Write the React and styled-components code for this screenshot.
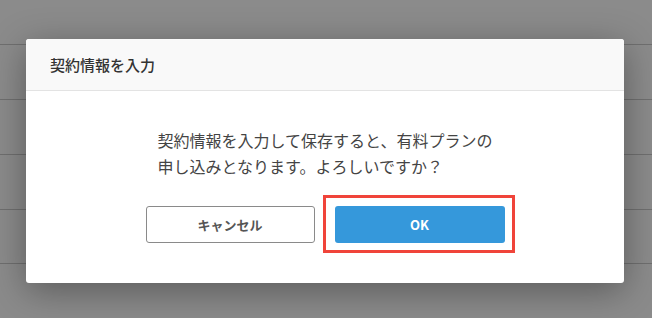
import React from "react";
import styled, { createGlobalStyle } from "styled-components";

const Global = createGlobalStyle`
  html, body { margin: 0; padding: 0; }
  body {
    background: #8b8b8b;
    font-family: "Noto Sans CJK JP", "Noto Sans", sans-serif;
  }
`;

const Page = styled.div`
  position: relative;
  width: 652px;
  height: 318px;
  overflow: hidden;
  background: #8b8b8b;
`;

const Row = styled.div`
  height: ${(p) => p.$h}px;
  border-bottom: 1px solid #6f6f6f;
`;

const Modal = styled.div`
  position: absolute;
  left: 26px;
  top: 39px;
  width: 598px;
  background: #fff;
  border-radius: 3px;
  box-shadow: 0 8px 36px rgba(0, 0, 0, 0.35);
  overflow: hidden;
`;

const Header = styled.div`
  height: 51px;
  display: flex;
  align-items: center;
  padding: 0 24px;
  background: #f9f9f9;
  border-bottom: 1px solid #e3e3e3;
`;

const Title = styled.h2`
  margin: 0;
  font-size: 15px;
  font-weight: 500;
  color: #333;
`;

const Body = styled.div`
  display: flex;
  flex-direction: column;
  align-items: center;
  padding: 36px 0 40px;
`;

const Message = styled.p`
  margin: 0 0 27px;
  font-size: 16px;
  line-height: 26px;
  color: #444;
  text-align: left;
`;

const Actions = styled.div`
  display: flex;
  gap: 20px;
`;

const Button = styled.button`
  width: ${(p) => p.$w}px;
  height: 37px;
  border-radius: 3px;
  font-family: "Noto Sans CJK JP", "Noto Sans", sans-serif;
  font-size: 13px;
  font-weight: 700;
  cursor: pointer;
  display: flex;
  align-items: center;
  justify-content: center;
  padding: 0;
  ${(p) =>
    p.$primary
      ? `background: #3598db; color: #fff; border: none;`
      : `background: #fff; color: #555; border: 1px solid #8a8a8a;`}
`;

const Highlight = styled.div`
  position: relative;
`;

const HighlightFrame = styled.div`
  position: absolute;
  left: -12px;
  top: -11px;
  right: -10px;
  bottom: -10px;
  border: 3px solid #f0443a;
  pointer-events: none;
`;

export default function App() {
  return (
    <>
      <Global />
      <Page>
        <Row $h={44} />
        <Row $h={54} />
        <Row $h={54} />
        <Row $h={54} />
        <Row $h={53} />
        <Modal>
          <Header>
            <Title>契約情報を入力</Title>
          </Header>
          <Body>
            <Message>
              契約情報を入力して保存すると、有料プランの
              <br />
              申し込みとなります。よろしいですか？
            </Message>
            <Actions>
              <Button $w={169}>キャンセル</Button>
              <Highlight>
                <Button $w={170} $primary>OK</Button>
                <HighlightFrame />
              </Highlight>
            </Actions>
          </Body>
        </Modal>
      </Page>
    </>
  );
}
